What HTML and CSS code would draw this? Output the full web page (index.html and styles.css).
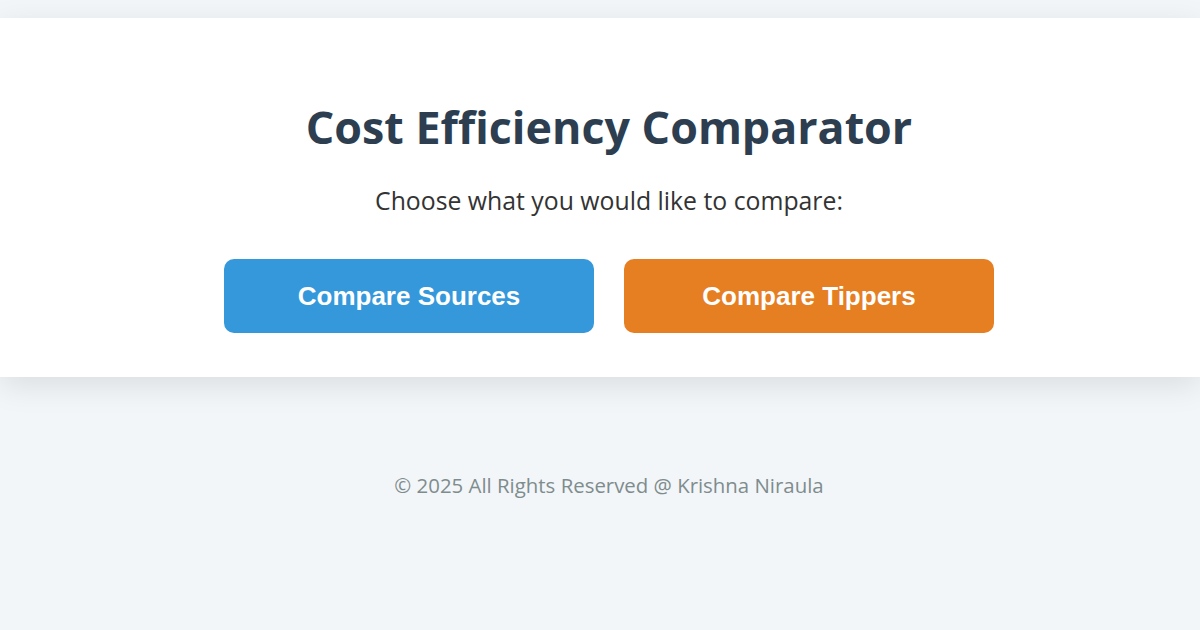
FILE: index.html
```html
<!DOCTYPE html>
<html lang="en">
<head>
<meta charset="utf-8">
<title>Cost Efficiency Comparator</title>
<link rel="stylesheet" href="styles.css">
</head>
<body>
<main class="card">
  <h1 class="title">Cost Efficiency Comparator</h1>
  <p class="subtitle">Choose what you would like to compare:</p>
  <div class="actions">
    <button class="btn btn-blue" type="button">Compare Sources</button>
    <button class="btn btn-orange" type="button">Compare Tippers</button>
  </div>
</main>
<footer class="footer">© 2025 All Rights Reserved @ Krishna Niraula</footer>
</body>
</html>
```
FILE: styles.css
```css
html, body {
  margin: 0;
  padding: 0;
}
body {
  background: #f2f6f9;
  font-family: "Open Sans", "Noto Sans", sans-serif;
  padding-top: 18px;
  min-height: 630px;
  box-sizing: border-box;
}
.card {
  background: #ffffff;
  box-shadow: 0 8px 30px rgba(0, 0, 0, 0.10);
  padding: 82px 0 44px 18px;
  display: flex;
  flex-direction: column;
  align-items: center;
}
.title {
  margin: 0;
  font-size: 44.8px;
  line-height: 54px;
  font-weight: 700;
  color: #2c3e50;
}
.subtitle {
  margin: 30px 0 0;
  font-size: 24.8px;
  line-height: 32px;
  color: #333333;
}
.actions {
  display: flex;
  gap: 30px;
  margin-top: 43px;
}
.btn {
  width: 370px;
  height: 74px;
  border: none;
  border-radius: 10px;
  color: #ffffff;
  font-family: "Liberation Sans", Arial, sans-serif;
  font-weight: 700;
  font-size: 26px;
  cursor: pointer;
}
.btn-blue { background: #3498db; }
.btn-orange { background: #e67e22; }
.footer {
  text-align: center;
  padding: 94px 0 0 18px;
  font-size: 20.4px;
  line-height: 28px;
  color: #7f8c8d;
}
```
